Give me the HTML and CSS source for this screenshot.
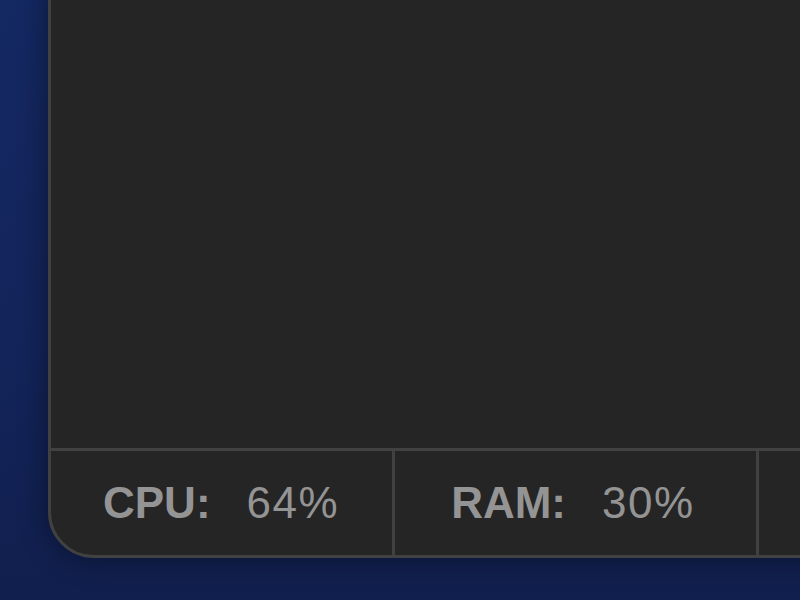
FILE: index.html
```html
<!DOCTYPE html>
<html lang="en">
<head>
    <meta charset="UTF-8">
    <meta name="viewport" content="width=device-width, initial-scale=1.0">
    <title>Monitor</title>
    <link rel="stylesheet" href="styles.css">
</head>
<body class="page">
    <div class="window">
        <div class="window__body"></div>
        <div class="stats">
            <div class="stats__item">
                <span class="stats__label">CPU:</span>
                <span class="stats__value">64%</span>
            </div>
            <div class="stats__item">
                <span class="stats__label">RAM:</span>
                <span class="stats__value">30%</span>
            </div>
            <div class="stats__item stats__item--empty"></div>
        </div>
    </div>
</body>
</html>
```

FILE: styles.css
```css
*, ::after, ::before {
    box-sizing: border-box;
}
html, body{
    height: 100%;
}
body{
    margin: 0;
    font-family: "Liberation Sans", Arial, sans-serif;
    background: linear-gradient(180deg, #142862 0%, #13245a 60%, #111f4d 100%);
    overflow: hidden;
}
.page{
    padding-left: 48px;
}
.window{
    width: 820px;
    height: 578px;
    margin-top: -20px;
    display: flex;
    flex-direction: column;
    background: #252525;
    border: 3px solid #414141;
    border-radius: 0 0 0 46px;
    box-shadow: 0 0 30px rgba(0, 0, 0, 0.45);
}
.window__body{
    flex-grow: 1;
}
.stats{
    display: flex;
    height: 107px;
    border-top: 3px solid #414141;
}
.stats__item{
    display: flex;
    align-items: center;
    gap: 36px;
    padding: 0 53px 0 52px;
    border-right: 3px solid #414141;
    font-size: 44px;
    color: #949494;
    white-space: nowrap;
}
.stats__item + .stats__item{
    padding-left: 56px;
    padding-right: 61px;
}
.stats__item--empty{
    flex-grow: 1;
    border-right: none;
}
.stats__label{
    font-weight: bold;
}
.stats__value{
    letter-spacing: 1.5px;
}
```
